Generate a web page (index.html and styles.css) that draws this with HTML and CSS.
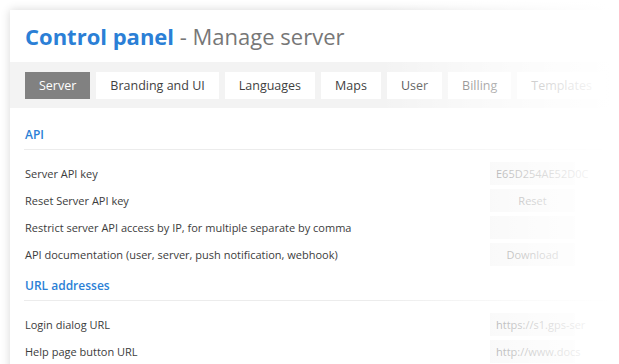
FILE: index.html
```html
<!DOCTYPE html>
<html>
<head>
<meta charset="utf-8">
<link rel="stylesheet" href="styles.css">
</head>
<body>
<div class="page">
  <div class="panel">
    <h1 class="title"><span class="title-main">Control panel</span> - Manage server</h1>
    <div class="tabbar">
      <span class="tab active">Server</span>
      <span class="tab">Branding and UI</span>
      <span class="tab">Languages</span>
      <span class="tab">Maps</span>
      <span class="tab">User</span>
      <span class="tab">Billing</span>
      <span class="tab">Templates</span>
    </div>
    <div class="content">
      <div class="section">
        <h2 class="section-title">API</h2>
        <div class="rows">
          <div class="row"><span class="label">Server API key</span><span class="control input">E65D254AE52D0C</span></div>
          <div class="row"><span class="label">Reset Server API key</span><span class="control button">Reset</span></div>
          <div class="row"><span class="label">Restrict server API access by IP, for multiple separate by comma</span><span class="control input"></span></div>
          <div class="row"><span class="label">API documentation (user, server, push notification, webhook)</span><span class="control button">Download</span></div>
        </div>
      </div>
      <div class="section">
        <h2 class="section-title">URL addresses</h2>
        <div class="rows">
          <div class="row"><span class="label">Login dialog URL</span><span class="control input">https://s1.gps-ser</span></div>
          <div class="row"><span class="label">Help page button URL</span><span class="control input">http://www.docs</span></div>
        </div>
      </div>
    </div>
  </div>
  <div class="fade"></div>
</div>
</body>
</html>
```
FILE: styles.css
```css
html, body {
  margin: 0;
  padding: 0;
  background: #fff;
  overflow: hidden;
}
body {
  font-family: "Open Sans", "Noto Sans", sans-serif;
  color: #444;
}
.page {
  position: relative;
  width: 619px;
  height: 364px;
  overflow: hidden;
  padding: 10px 0 0 10px;
  box-sizing: border-box;
}
.panel {
  width: 760px;
  height: 500px;
  background: #fff;
  box-shadow: 0 0 9px rgba(0, 0, 0, 0.16);
}
.title {
  margin: 0;
  height: 52px;
  padding: 0 15px;
  font-size: 22px;
  font-weight: 400;
  line-height: 52px;
  color: #777;
  white-space: nowrap;
}
.title-main {
  color: #2b7fd6;
  font-weight: 700;
}
.tabbar {
  background: #f3f3f3;
  height: 46px;
  padding: 0 15px;
  display: flex;
  align-items: center;
  gap: 6px;
}
.tab {
  height: 27px;
  line-height: 27px;
  padding: 0 14px;
  background: #fff;
  font-size: 12.5px;
  color: #3f3f3f;
  white-space: nowrap;
}
.tab.active {
  background: #818181;
  color: #fff;
}
.content {
  padding: 13px 15px 0 14px;
}
.section + .section {
  margin-top: 4px;
}
.section-title {
  margin: 0;
  height: 28px;
  line-height: 28px;
  font-size: 12px;
  font-weight: 600;
  color: #2b7fd6;
  border-bottom: 1px solid #ececec;
  padding-left: 1px;
}
.rows {
  margin-top: 10px;
}
.row {
  display: flex;
  align-items: center;
  height: 27px;
}
.label {
  width: 465px;
  flex: none;
  padding-left: 1px;
  font-size: 11px;
  color: #3c3c3c;
  white-space: nowrap;
}
.control {
  width: 85px;
  height: 23px;
  line-height: 23px;
  background: #f2f2f2;
  font-size: 11px;
  color: #555;
  white-space: nowrap;
  box-sizing: border-box;
}
.input {
  padding-left: 6px;
}
.button {
  text-align: center;
}
.fade {
  position: absolute;
  inset: 0;
  pointer-events: none;
  background: linear-gradient(to right, rgba(255,255,255,0) 380px, rgba(255,255,255,0.45) 460px, rgba(255,255,255,0.78) 540px, #fff 610px);
}
```
